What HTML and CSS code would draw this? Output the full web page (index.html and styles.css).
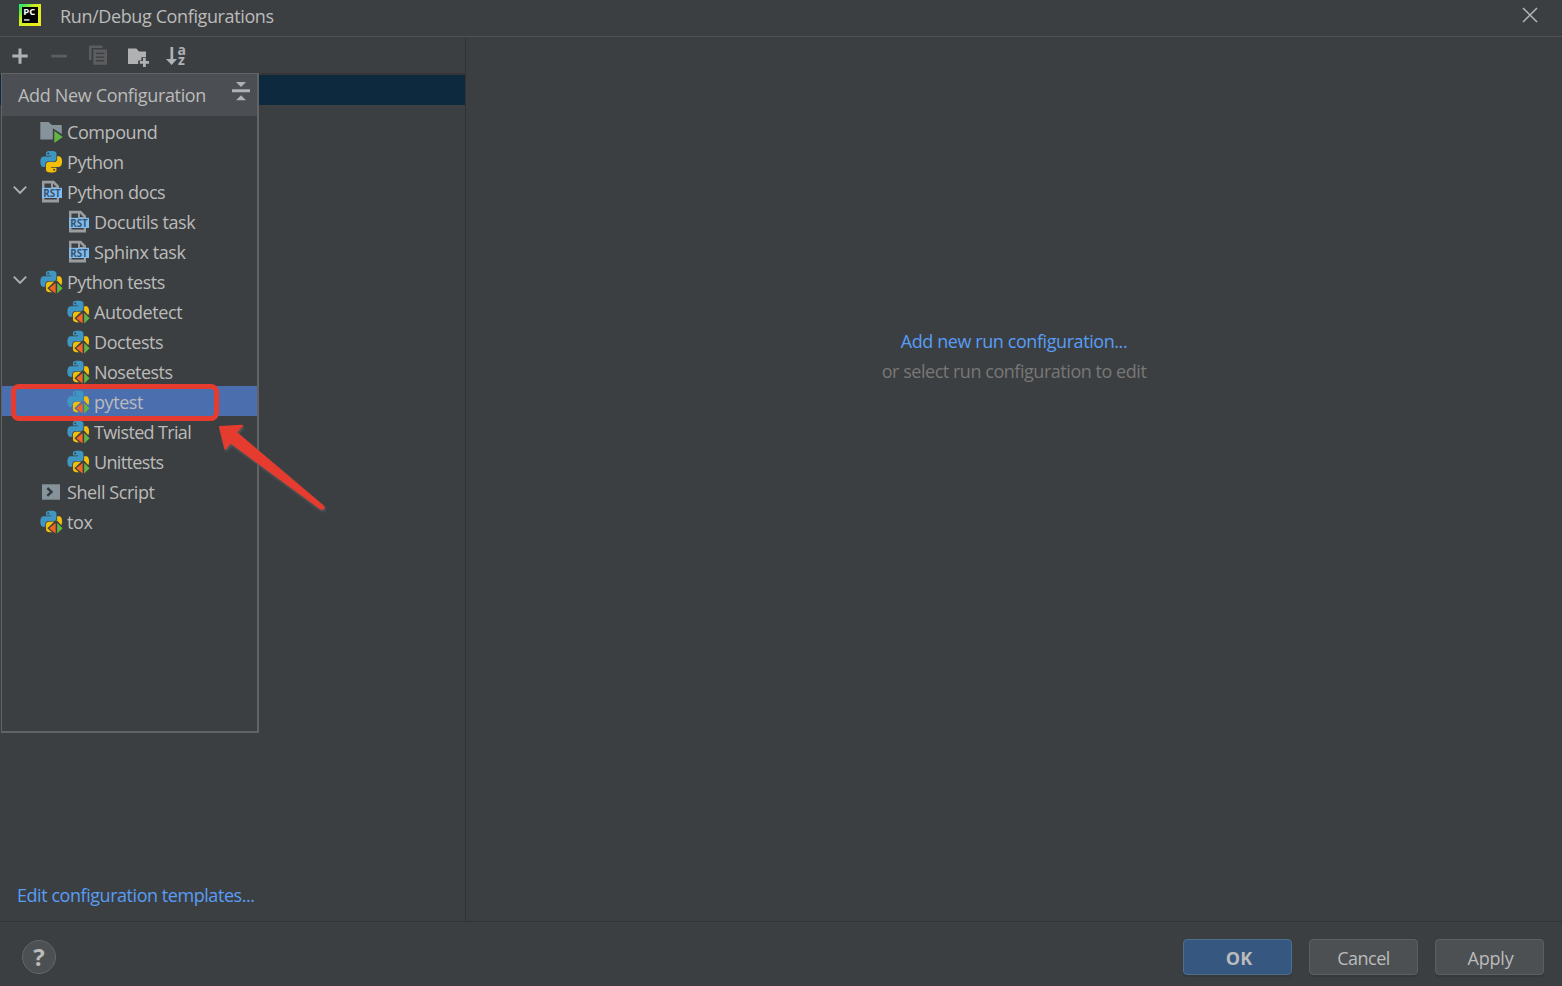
FILE: index.html
```html
<!DOCTYPE html>
<html lang="en">
<head>
<meta charset="utf-8">
<title>Run/Debug Configurations</title>
<link rel="stylesheet" href="styles.css">
</head>
<body>
<svg class="defs" width="0" height="0">
  <defs>
    <path id="snake" d="M14.25.18l.9.2.73.26.59.3.45.32.34.34.25.34.16.33.1.3.04.26.02.2-.01.13V8.5l-.05.63-.13.55-.21.46-.26.38-.3.31-.33.25-.35.19-.35.14-.33.1-.3.07-.26.04-.21.02H8.77l-.69.05-.59.14-.5.22-.41.27-.33.32-.27.35-.2.36-.15.37-.1.35-.07.32-.04.27-.02.21v3.06H3.17l-.21-.03-.28-.07-.32-.12-.35-.18-.36-.26-.36-.36-.35-.46-.32-.59-.28-.73-.21-.88-.14-1.05-.05-1.23.06-1.22.16-1.04.24-.87.32-.71.36-.57.4-.44.42-.33.42-.24.4-.16.36-.1.32-.05.24-.01h.16l.06.01h8.16v-.83H6.18l-.01-2.75-.02-.37.05-.34.11-.31.17-.28.25-.26.31-.23.38-.2.44-.18.51-.15.58-.12.64-.1.71-.06.77-.04.84-.02 1.27.05zm-6.3 1.98l-.23.33-.08.41.08.41.23.34.33.22.41.09.41-.09.33-.22.23-.34.08-.41-.08-.41-.23-.33-.33-.22-.41-.09-.41.09z"/>
    <symbol id="python" viewBox="0 0 24 24">
      <g transform="translate(.4 .9) scale(.9)"><use href="#snake" fill="#3e97c3"/><use href="#snake" fill="#f2be0c" transform="rotate(180 12 12)"/></g>
    </symbol>
    <symbol id="pytests" viewBox="0 0 24 24">
      <g transform="translate(.4 .7) scale(.9)"><use href="#snake" fill="#3e97c3"/><use href="#snake" fill="#f2be0c" transform="rotate(180 12 12)"/></g>
      <path class="cut" d="M7.400 18.300 15.200 10.700h2.100L24 18.300 17.300 25H15.200z"/>
      <path fill="#f26522" d="M15.600 13v10.600l-6.400-5.300z"/>
      <path fill="#62b543" d="M17.200 13v10.600l5.400-5.300z"/>
    </symbol>
    <symbol id="rst" viewBox="0 0 24 24">
      <path fill="#9a9da0" fill-rule="evenodd" d="M2 .7h12l5 5v16.800H2zM4.500 3.500v16h12.300V8H11V3.500z"/>
      <path fill="#9a9da0" d="M11 2.500h2.500L17.500 7v2H11z"/>
      <path class="cut" d="M13 3.500v3.400h3.400z"/>
      <path fill="#7ebcf2" d="M2 7.800h20V18H2z"/>
      <text class="rst-text" x="3.200" y="16.900" textLength="17.600" lengthAdjust="spacingAndGlyphs">RST</text>
    </symbol>
    <symbol id="compound" viewBox="0 0 24 24">
      <path fill="#87939a" d="M.3 2h8.300l3.200 3h10v14.500H.3z"/>
      <path class="cut" d="M12.800 8.200 24 15.500v8H12.800z"/>
      <path fill="#62b543" d="M14.300 11v12l8.500-6z"/>
    </symbol>
    <symbol id="shell" viewBox="0 0 24 24">
      <path fill="#87939a" d="M2 4.300h18v15.400H2z"/>
      <path fill="none" stroke="#323a40" stroke-width="2.400" d="m7.300 8 4.200 3.900-4.200 3.900"/>
    </symbol>
    <symbol id="chevron" viewBox="0 0 14 10">
      <path fill="none" stroke="#afb1b3" stroke-width="1.900" d="m.8 1.700 6.200 6.200 6.200-6.200"/>
    </symbol>
  </defs>
</svg>
<div class="dialog">
  <header class="titlebar">
    <svg class="logo" width="22" height="22" viewBox="0 0 22 22">
      <defs><linearGradient id="lg" x1="0" y1="0" x2="1" y2="1"><stop offset="0" stop-color="#21e789"/><stop offset=".15" stop-color="#4be84d"/><stop offset=".4" stop-color="#d0ee20"/><stop offset="1" stop-color="#f0ea20"/></linearGradient></defs>
      <path fill="url(#lg)" d="M0 0h22v22H0z"/><path d="M3 3h16v16H3z"/>
      <text class="logo-text" x="4.200" y="11.200" textLength="12" lengthAdjust="spacingAndGlyphs">PC</text>
      <path fill="#fff" d="M5 15.300h5.500v1.300H5z"/>
    </svg>
    <h1 class="title">Run/Debug Configurations</h1>
    <svg class="close" width="16" height="16" viewBox="0 0 16 16"><path fill="none" stroke="#b4b6b8" stroke-width="1.500" d="m1 1 14 14M15 1 1 15"/></svg>
  </header>
  <main class="body">
    <section class="sidebar">
      <div class="toolbar">
        <svg width="24" height="24" viewBox="0 0 24 24"><path fill="none" stroke="#afb1b3" stroke-width="3" d="M12 4.500v15.200M4.300 12.100h15.400"/></svg>
        <svg width="24" height="24" viewBox="0 0 24 24"><path fill="#5b5d5f" d="M4.300 10.700h15.600v2.800H4.300z"/></svg>
        <svg width="24" height="24" viewBox="0 0 24 24"><path fill="#5b5d5f" d="M3 1.500h13.500V4H5.500v12H3z"/><path fill="#5b5d5f" fill-rule="evenodd" d="M7.300 5.500H21v15.300H7.300zM10 8.700V10h8.300V8.700zm0 3.700v1.300h8.300v-1.300zm0 3.700v1.300h8.300v-1.300z"/></svg>
        <svg width="24" height="24" viewBox="0 0 24 24"><path fill="#afb1b3" d="M3 4.600h8.300l2.700 3h7v5.700h-4.600v3.200h-3.200v3.600H3z"/><path fill="none" stroke="#afb1b3" stroke-width="2.800" d="M19.400 13.900v9M14.900 18.400h9.100"/></svg>
        <svg width="24" height="24" viewBox="0 0 24 24"><path fill="#afb1b3" d="M6.500 3h2.700v12H13l-5.300 6L2 15h4.500z"/><text class="sort-text" x="13.600" y="10.600">a</text><text class="sort-text" x="13.900" y="21">z</text></svg>
      </div>
      <div class="selected-strip"></div>
      <a class="link templates">Edit configuration templates...</a>
    </section>
    <section class="content">
      <a class="link">Add new run configuration...</a>
      <p class="hint">or select run configuration to edit</p>
    </section>
  </main>
  <footer class="footer">
    <button class="help">?</button>
    <div class="actions">
      <button class="btn primary">OK</button>
      <button class="btn">Cancel</button>
      <button class="btn">Apply</button>
    </div>
  </footer>

  <aside class="popup">
    <div class="popup-head"><span>Add New Configuration</span>
      <svg width="18" height="20" viewBox="0 0 18 20"><path fill="#afb1b3" d="M4 1h10L9 6zM0 8.300h18v3H0zM4 19.300h10l-5-5z"/></svg>
    </div>
    <ul class="tree">
      <li><i class="arrow"></i><svg class="ic"><use href="#compound"/></svg><span>Compound</span></li>
      <li><i class="arrow"></i><svg class="ic"><use href="#python"/></svg><span>Python</span></li>
      <li><i class="arrow"><svg width="14" height="10"><use href="#chevron"/></svg></i><svg class="ic"><use href="#rst"/></svg><span>Python docs</span></li>
      <li class="child"><i class="arrow"></i><svg class="ic"><use href="#rst"/></svg><span>Docutils task</span></li>
      <li class="child"><i class="arrow"></i><svg class="ic"><use href="#rst"/></svg><span>Sphinx task</span></li>
      <li><i class="arrow"><svg width="14" height="10"><use href="#chevron"/></svg></i><svg class="ic"><use href="#pytests"/></svg><span class="tight">Python tests</span></li>
      <li class="child"><i class="arrow"></i><svg class="ic"><use href="#pytests"/></svg><span>Autodetect</span></li>
      <li class="child"><i class="arrow"></i><svg class="ic"><use href="#pytests"/></svg><span>Doctests</span></li>
      <li class="child"><i class="arrow"></i><svg class="ic"><use href="#pytests"/></svg><span class="tight">Nosetests</span></li>
      <li class="child active"><i class="arrow"></i><svg class="ic"><use href="#pytests"/></svg><span>pytest</span></li>
      <li class="child"><i class="arrow"></i><svg class="ic"><use href="#pytests"/></svg><span class="tighter">Twisted Trial</span></li>
      <li class="child"><i class="arrow"></i><svg class="ic"><use href="#pytests"/></svg><span class="tighter">Unittests</span></li>
      <li><i class="arrow"></i><svg class="ic"><use href="#shell"/></svg><span>Shell Script</span></li>
      <li><i class="arrow"></i><svg class="ic"><use href="#pytests"/></svg><span>tox</span></li>
    </ul>
  </aside>
  <div class="callout"></div>
  <svg class="pointer" width="116" height="96" viewBox="0 0 116 96"><path fill="#e63c30" stroke="#e63c30" stroke-width="2" stroke-linejoin="round" d="M5 7l22-1.200-6.300 6.500 87.700 74.200q1.200 2.500-2.400 2.200L15.300 22.300 10.300 28.500z"/></svg>
</div>
</body>
</html>
```
FILE: styles.css
```css
* { box-sizing: border-box; }
body {
  margin: 0;
  background: #3c3f41;
  color: #bbbbbb;
  font: 18px/30px "Open Sans", "Noto Sans", sans-serif;
  letter-spacing: -.42px;
  overflow: hidden;
}
.defs { position: absolute; }
.dialog {
  --row-bg: #3c3f41;
  position: relative;
  display: flex;
  flex-direction: column;
  width: 1562px;
  height: 986px;
}
.cut { fill: var(--row-bg); }
.rst-text { font: bold 11px "Open Sans", sans-serif; letter-spacing: 0; fill: #3b546b; }
.logo-text { font: bold 9.500px "Open Sans", sans-serif; letter-spacing: 0; fill: #fff; }
.sort-text { font: bold 14px "Open Sans", sans-serif; letter-spacing: 0; fill: #afb1b3; }

.titlebar {
  display: flex;
  align-items: flex-start;
  height: 37px;
  padding: 0 24px 0 19px;
  border-bottom: 1px solid #515151;
}
.logo { margin-top: 4px; }
.title { flex: 1; margin: 1px 0 0 19px; font-size: 18px; font-weight: 400; letter-spacing: -.38px; }
.close { margin-top: 7px; }

.body { display: flex; flex: 1; }
.sidebar {
  display: flex;
  flex-direction: column;
  width: 466px;
  border-right: 1px solid #323232;
}
.toolbar {
  display: flex;
  gap: 15px;
  height: 38px;
  padding: 7px 8px;
  border-bottom: 2px solid #353535;
}
.toolbar svg { overflow: visible; }
.selected-strip { height: 30px; background: #0d293e; }
.link { color: #589df6; white-space: nowrap; }
.templates { margin: auto 0 11px 17px; letter-spacing: -.45px; }
.content {
  display: flex;
  flex: 1;
  flex-direction: column;
  align-items: center;
  padding: 289px 0 0 0;
}
.hint { margin: 0; color: #777777; letter-spacing: -.46px; }

.footer {
  display: flex;
  justify-content: space-between;
  height: 65px;
  padding: 17px 18px 0 22px;
  border-top: 1px solid #313335;
}
.help {
  width: 34px;
  height: 34px;
  margin-top: 1px;
  padding: 0;
  border: 1px solid #646769;
  border-radius: 50%;
  background: #4c5052;
  color: #bbbbbb;
  font: 700 24px/30px "Open Sans", sans-serif;
}
.actions { display: flex; gap: 17px; }
.btn {
  width: 109px;
  height: 36px;
  padding: 2px 0 0;
  border: 1px solid #5e6060;
  border-radius: 4px;
  background: #4c5052;
  box-shadow: 0 2px 1px #36383a;
  color: #bbbbbb;
  font: 18px/32px "Open Sans", sans-serif;
  letter-spacing: -.5px;
}
.btn:last-child { letter-spacing: -.2px; padding-left: 2px; }
.primary { border: 1px solid #4c708c; background: #365880; font-weight: 700; letter-spacing: 0; padding-left: 3px; }

.popup {
  position: absolute;
  top: 73px;
  left: 1px;
  width: 258px;
  height: 660px;
  border: 1px solid #616364;
  border-width: 1px 2px 2px 1px;
  background: #3c3f41;
}
.popup-head {
  display: flex;
  justify-content: space-between;
  height: 42px;
  padding: 6px 7px 0 16px;
  background: #4b4e52;
  letter-spacing: -.34px;
}
.popup-head svg { margin-top: 1px; }
.tree { margin: 0; padding: 0; list-style: none; }
.tree li { display: flex; align-items: center; height: 30px; padding: 2px 0 0 11px; white-space: nowrap; }
.tree .child { padding-left: 38px; }
.tree .active { --row-bg: #4b6eaf; background: #4b6eaf; }
.tree .tight { letter-spacing: -.52px; }
.tree .tighter { letter-spacing: -.65px; }
.arrow { display: flex; width: 27px; padding-bottom: 4px; }
.ic { width: 24px; height: 24px; margin-right: 3px; flex: none; }

.callout {
  position: absolute;
  top: 384px;
  left: 11px;
  width: 208px;
  height: 37px;
  border: 5px solid #e63c30;
  border-radius: 8px;
}
.pointer { position: absolute; top: 420px; left: 215px; filter: drop-shadow(1px 2px 1px #55585a); }
```
